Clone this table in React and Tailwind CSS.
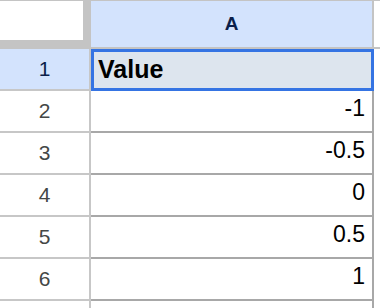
const rows = [
  { n: 1, v: 'Value', header: true },
  { n: 2, v: '-1' },
  { n: 3, v: '-0.5' },
  { n: 4, v: '0' },
  { n: 5, v: '0.5' },
  { n: 6, v: '1' },
  { n: '', v: '' },
];

export default function App() {
  return (
    <div className="w-[380px] h-[308px] overflow-hidden bg-white border-t border-[#c4c4c4] font-['Liberation_Sans',Arial,sans-serif]">
      {/* column header row */}
      <div className="flex h-[48px]">
        <div className="w-[91px] h-[48px] bg-[#c4c4c4] flex-shrink-0">
          <div className="w-[83px] h-[39px] bg-white" />
        </div>
        <div className="w-[283px] h-[48px] flex-shrink-0 bg-[#d3e3fd] border-r-2 border-b-2 border-[#c4c4c4] flex items-center justify-center text-[19px] font-bold text-[#0b1f4a]">
          A
        </div>
        <div className="flex-1 border-b-2 border-[#c4c4c4]" />
      </div>

      {rows.map((r, i) => (
        <div key={i} className="flex h-[42px]">
          <div
            className={`w-[91px] h-[42px] flex-shrink-0 border-r-2 border-b-2 border-[#c7c7c7] flex items-center justify-center text-[21px] ${
              r.header ? 'bg-[#d3e3fd] text-[#0b1f4a]' : 'text-[#444746]'
            }`}
          >
            {r.n}
          </div>
          {r.header ? (
            <div className="w-[283px] h-[42px] flex-shrink-0 bg-[#dde5ee] border-[3px] border-[#3574e3] flex items-center pl-[4px] text-[25px] font-bold text-black">
              {r.v}
            </div>
          ) : (
            <div className="w-[283px] h-[42px] flex-shrink-0 border-r-2 border-b-2 border-[#a8a8a8] flex items-end justify-end pr-[7px] pb-[11px] text-[23px] leading-none text-black">
              {r.v}
            </div>
          )}
          <div className="flex-1" />
        </div>
      ))}
    </div>
  );
}
